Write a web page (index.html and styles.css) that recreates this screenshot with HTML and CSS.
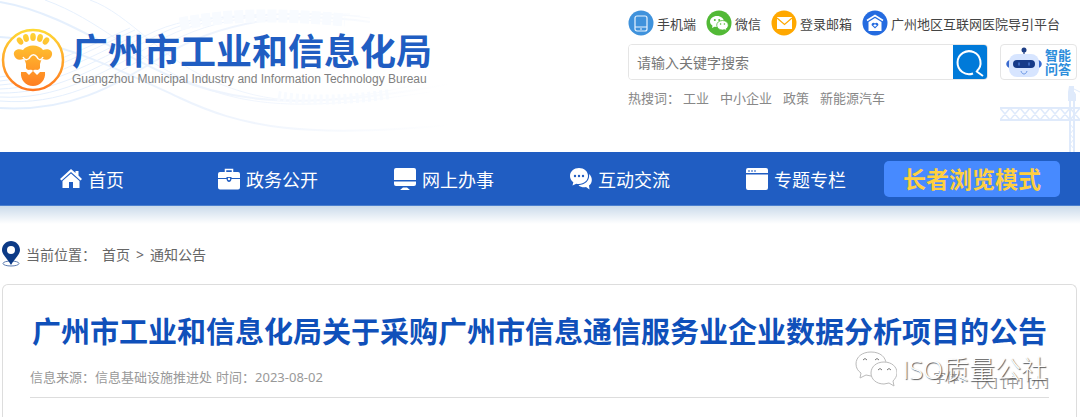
FILE: index.html
```html
<!DOCTYPE html>
<html lang="zh-CN">
<head>
  <meta charset="UTF-8">
  <title>广州市工业和信息化局</title>
  <meta name="viewport" content="width=device-width, initial-scale=1">
  <link rel="stylesheet" href="styles.css">
</head>
<body>
  <header class="site-header">
    <svg class="bg-waves" viewBox="0 0 500 152" aria-hidden="true">
      <defs>
        <linearGradient id="wave-fade" gradientUnits="userSpaceOnUse" x1="0" y1="0" x2="500" y2="0">
          <stop offset="0" stop-color="#e2eefd"/>
          <stop offset="0.5" stop-color="#f0f5fd"/>
          <stop offset="0.9" stop-color="#ffffff"/>
        </linearGradient>
      </defs>
      <g fill="none" stroke="url(#wave-fade)">
        <path d="M0 108C70 112 110 88 165 55S290 10 370 22" stroke-width="2"/>
        <path d="M0 101C60 106 105 82 160 48S290 8 370 18"/>
        <path d="M0 97C55 100 100 76 155 43S280 12 360 16"/>
        <path d="M0 93C50 94 95 70 150 39S270 16 350 14"/>
        <path d="M0 89C45 88 90 65 145 36S260 19 340 22"/>
        <path d="M0 85C45 82 85 60 140 33"/>
        <path d="M0 81C40 77 80 55 135 30"/>
        <path d="M0 77C36 72 76 52 130 28"/>
        <path d="M0 37C60 40 120 70 180 98S300 140 460 124" stroke-width="2"/>
        <path d="M0 2C60 12 110 50 170 76S300 112 450 84" stroke-width="2"/>
        <path d="M45 0C100 20 130 55 190 82S310 110 430 92"/>
        <path d="M90 0C130 14 160 60 220 84S330 104 420 84"/>
      </g>
      <path d="M180 24C230 14 280 14 345 20" fill="none" stroke="#f8fbff" stroke-width="13" stroke-dasharray="9 2"/>
      <path d="M278 96C310 102 350 100 390 94" fill="none" stroke="#f8fbff" stroke-width="10" stroke-dasharray="3 3"/>
    </svg>
    <svg class="bg-crane" viewBox="0 0 80 68" aria-hidden="true">
      <g fill="none" stroke="#dfeafb" stroke-width="2">
        <path d="M0 24H80M0 36H80"/>
        <path d="M0 24L10 36L20 24L30 36L40 24L50 36L60 24L70 36L80 24M0 36L10 24L20 36L30 24L40 36L50 24L60 36L70 24L80 36" stroke-width="1.500"/>
        <path d="M70 8V68M74 8V68"/>
        <path d="M70 40L74 45L70 50L74 55L70 60L74 65M72 4L80 8" stroke-width="1"/>
      </g>
      <path d="M69 2H74V8L76 10V17H68V8Z" fill="#dfeafb"/>
    </svg>

    <a class="brand" href="#">
      <svg class="brand-mark" viewBox="0 0 64 64" aria-hidden="true">
        <defs>
          <linearGradient id="mark-fill" gradientUnits="userSpaceOnUse" x1="0" y1="0" x2="0" y2="64">
            <stop offset="0" stop-color="#ffdc35"/>
            <stop offset="1" stop-color="#ff7420"/>
          </linearGradient>
        </defs>
        <circle cx="32" cy="32" r="30" fill="#fff" stroke="url(#mark-fill)" stroke-width="2.500"/>
        <g fill="url(#mark-fill)">
          <ellipse cx="19" cy="13" rx="2.800" ry="4" transform="rotate(-35 19 13)"/>
          <ellipse cx="25" cy="10" rx="2.800" ry="4" transform="rotate(-15 25 10)"/>
          <ellipse cx="32" cy="9" rx="2.800" ry="4"/>
          <ellipse cx="39" cy="10" rx="2.800" ry="4" transform="rotate(15 39 10)"/>
          <ellipse cx="45" cy="13" rx="2.800" ry="4" transform="rotate(35 45 13)"/>
          <path d="M22 22C26 16 38 16 42 22C48 20 52 23 51 27C50 31 46 33 42 31C40 31 40 33 39 36L39 40C37 44 34 40 32 43C30 40 27 44 25 40L25 36C24 33 24 31 22 31C18 33 14 31 13 27C12 23 16 20 22 22Z"/>
          <path d="M20 44L25 44L28 47L32 43L36 47L39 44L44 44C45 52 39 58 32 58S19 52 20 44Z"/>
        </g>
        <path d="M22 29C24 33 28 32 29 29C31 26 34 26 36 29C37 32 40 33 42 29" fill="none" stroke="#fff" stroke-width="1.500"/>
      </svg>
      <span class="brand-text">
        <span class="brand-cn">广州市工业和信息化局</span>
        <span class="brand-en">Guangzhou Municipal Industry and Information Technology Bureau</span>
      </span>
    </a>

    <div class="header-tools">
      <ul class="quick-links">
        <li><a href="#">
          <svg viewBox="0 0 26 26" aria-hidden="true">
            <circle cx="13" cy="13" r="12.500" fill="#3f92dc"/>
            <rect x="7" y="6" width="12" height="15" rx="2" fill="none" stroke="#e8f3ff" stroke-width="1.200"/>
            <path d="M7 17H19M12 19H14" stroke="#e8f3ff"/>
          </svg>手机端</a></li>
        <li><a href="#">
          <svg viewBox="0 0 26 26" aria-hidden="true">
            <circle cx="13" cy="13" r="12.500" fill="#52b936"/>
            <path d="M11 6C7 6 4 8.500 4 11.500C4 13.300 5 14.700 6.500 15.700L6 18L8.500 16.700L11 17C15 17 18 14.500 18 11.500S15 6 11 6Z" fill="#fff"/>
            <path d="M16.500 10.500C13 10.500 10.700 12.700 10.700 15.200S13 20 16.500 20L18.700 19.700L20.600 20.800L20.100 18.900C21.500 18 22.300 16.700 22.300 15.200C22.300 12.700 20 10.500 16.500 10.500Z" fill="#fff" stroke="#52b936" stroke-width=".8"/>
            <g fill="#52b936"><circle cx="8.800" cy="10" r="1"/><circle cx="13.200" cy="10" r="1"/><circle cx="14.600" cy="14" r=".8"/><circle cx="18.400" cy="14" r=".8"/></g>
          </svg>微信</a></li>
        <li><a href="#">
          <svg viewBox="0 0 26 26" aria-hidden="true">
            <circle cx="13" cy="13" r="12.500" fill="#ffa800"/>
            <rect x="6" y="7" width="15" height="12" fill="#fff"/>
            <path d="M6 8L13.500 14.500L21 8" fill="none" stroke="#ffa800" stroke-width="1.200"/>
          </svg>登录邮箱</a></li>
        <li><a href="#">
          <svg viewBox="0 0 26 26" aria-hidden="true">
            <circle cx="13" cy="13" r="12.500" fill="#246be0"/>
            <path d="M5 10.500L13 5.500L21 10.500" fill="none" stroke="#fff" stroke-width="1.600"/>
            <path d="M6.500 12L13 8L19.500 12V21H6.500Z" fill="#fff"/>
            <path d="M13 18.500L9.700 15.300C9 13 12 12 13 13.600C14 12 17 13 16.300 15.300Z" fill="#246be0"/>
            <path d="M13 14V17M11.500 15.500H14.500" stroke="#fff"/>
          </svg>广州地区互联网医院导引平台</a></li>
      </ul>

      <div class="search-row">
        <form class="search-form">
          <input type="text" aria-label="关键字搜索" placeholder="请输入关键字搜索">
          <button type="button" aria-label="搜索">
            <svg viewBox="0 0 34 36" aria-hidden="true">
              <path d="M20 28.500A11.500 11.500 0 1 1 24 26M23 26L30 31" fill="none" stroke="#fff" stroke-width="2"/>
            </svg>
          </button>
        </form>
        <a class="ask-robot" href="#">
          <svg viewBox="0 0 36 32" aria-hidden="true">
            <path d="M18 4V9" stroke="#1e3f86" stroke-width="1.200"/>
            <circle cx="18" cy="4" r="2.500" fill="#1e3f86"/>
            <path d="M4 14C-1 15 -1 21 4 22ZM32 14C37 15 37 21 32 22Z" fill="#3a6bd0"/>
            <rect x="3" y="8" width="30" height="23" rx="8" fill="#d7e5ff"/>
            <rect x="7" y="14" width="22" height="8" rx="4" fill="#163a88"/>
            <path d="M12 18H14M22 18H24" stroke="#3b66bd" stroke-width="3"/>
            <path d="M15 25C16 29 20 29 21 25" fill="none" stroke="#6f9ae6"/>
          </svg>
          <span>智能<br>问答</span>
        </a>
      </div>

      <div class="hot-words">
        <span>热搜词：</span>
        <a href="#">工业</a>
        <a href="#">中小企业</a>
        <a href="#">政策</a>
        <a href="#">新能源汽车</a>
      </div>
    </div>
  </header>

  <nav class="main-nav">
    <a href="#">
      <svg viewBox="0 0 22 22" aria-hidden="true">
        <path d="M11 1L0 11L1.500 12.500L11 4L20.500 12.500L22 11L18.500 7.500V3H15.500V5Z"/>
        <path d="M11 5.500L2.500 13V20H9V14H13V20H19.500V13Z"/>
      </svg>首页</a>
    <a href="#">
      <svg viewBox="0 0 22 22" aria-hidden="true">
        <path d="M7.500 5V1.500H14.500V5" fill="none" stroke="#fff" stroke-width="1.500"/>
        <path d="M2 4H20Q22 4 22 6V10H13.500V9H8.500V10H0V6Q0 4 2 4Z"/>
        <path d="M0 11H8.500Q9 14 11 14T13.500 11H22V19.500Q22 21.500 20 21.500H2Q0 21.500 0 19.500Z"/>
        <circle cx="11" cy="11" r="1.200"/>
      </svg>政务公开</a>
    <a href="#">
      <svg viewBox="0 0 22 22" aria-hidden="true">
        <path d="M2 0H20Q22 0 22 2V12H0V2Q0 0 2 0ZM0 13.500H22V16Q22 18 20 18H2Q0 18 0 16ZM9 19.500H13L16 22H6Z"/>
      </svg>网上办事</a>
    <a href="#">
      <svg viewBox="0 0 22 22" aria-hidden="true">
        <path d="M9 0C4 0 0 3.500 0 8C0 10.500 1.300 12.800 3.300 14.200L2.500 17.500L6.300 15.700C13 17 18 13 18 8S14 0 9 0Z"/>
        <path d="M19 6C20 12 16 16.500 8.500 17.200C10.500 19 13.500 19.600 16 19L19.500 21.500L19 17.500C22.500 15 23 9.500 19 6Z"/>
        <g fill="#205dc2"><circle cx="5" cy="8" r="1.200"/><circle cx="9" cy="8" r="1.200"/><circle cx="13" cy="8" r="1.200"/></g>
      </svg>互动交流</a>
    <a href="#">
      <svg viewBox="0 0 22 22" aria-hidden="true">
        <path d="M2 0H20Q22 0 22 2V5H0V2Q0 0 2 0ZM0 6.500H22V20Q22 22 20 22H2Q0 22 0 20Z"/>
        <path d="M2 3H4M5 3H7M8 3H10" stroke="#205dc2" stroke-width="1.200"/>
      </svg>专题专栏</a>
    <button class="elder-mode" type="button">长者浏览模式</button>
  </nav>

  <main>
    <div class="breadcrumb">
      <svg viewBox="0 0 18 26" aria-hidden="true">
        <ellipse cx="9" cy="22.500" rx="8" ry="2.500" fill="none" stroke="#5b7bb0"/>
        <path d="M9 0C4 0 0 4 0 9C0 14 6 18 9 24C12 18 18 14 18 9C18 4 14 0 9 0Z" fill="#0c3a86"/>
        <circle cx="9" cy="9" r="4" fill="#fff"/>
      </svg>
      <span>当前位置：</span>
      <a href="#">首页</a>
      <span>&gt;</span>
      <a href="#">通知公告</a>
    </div>

    <article class="article">
      <h1>广州市工业和信息化局关于采购广州市信息通信服务业企业数据分析项目的公告</h1>
      <div class="article-meta">
        <span>信息来源：信息基础设施推进处</span>
        <span>时间：2023-08-02</span>
        <div class="font-size">
          字体：
          <button type="button">[大]</button>
          <button type="button">[中]</button>
          <button type="button">[小]</button>
        </div>
        <div class="watermark">
          <svg viewBox="0 0 42 36" aria-hidden="true">
            <path d="M16 1C7 1 1 6 1 13C1 17 3 20 6 22L5 27L11 24L16 25C25 25 31 20 31 13S25 1 16 1Z"/>
            <path d="M29 11C21 11 16 16 16 22S21 33 29 33L34 32L39 35L38 30C40 28 42 25 42 22C42 16 37 11 29 11Z"/>
            <path d="M8 9Q10 6 12 9M20 9Q22 6 24 9M23 19Q25 16 27 19M32 19Q34 16 36 19" class="eyes"/>
          </svg>
          <span>ISO质量公社</span>
        </div>
      </div>
    </article>
  </main>
</body>
</html>
```
FILE: styles.css
```css
:root {
  --blue: #205dc2;
  --title-blue: #0f50ba;
  --border: #dddddd;
}

* {
  box-sizing: border-box;
}

body {
  margin: 0;
  min-height: 100vh;
  display: flex;
  flex-direction: column;
  font-family: "Noto Sans", "Noto Sans CJK SC", sans-serif;
  font-size: 13px;
  color: #444;
  background: #fff;
}

a {
  color: inherit;
  text-decoration: none;
}

button {
  font-family: inherit;
  cursor: pointer;
}

svg {
  display: block;
  flex: none;
}

/* header */
.site-header {
  position: relative;
  display: flex;
  justify-content: space-between;
  align-items: flex-start;
  padding: 10px 3px 44px 1px;
}

.bg-waves {
  position: absolute;
  left: 0;
  top: 0;
  width: 500px;
  height: 152px;
}

.bg-crane {
  position: absolute;
  right: 0;
  bottom: 0;
  width: 80px;
  height: 68px;
}

.brand {
  position: relative;
  display: flex;
  gap: 7px;
  padding-top: 18px;
}

.brand-mark {
  width: 64px;
  height: 64px;
}

.brand-text {
  padding-top: 5px;
}

.brand-cn,
.brand-en {
  display: block;
  white-space: nowrap;
}

.brand-cn {
  font-size: 36px;
  line-height: 38px;
  font-weight: 700;
  color: var(--blue);
}

.brand-en {
  font-family: "Liberation Sans", Arial, sans-serif;
  font-size: 12px;
  line-height: 16px;
  color: #808080;
}

.header-tools {
  position: relative;
  width: 449px;
}

.quick-links {
  display: flex;
  gap: 10px;
  margin: 0 0 8px;
  padding: 0;
  list-style: none;
  white-space: nowrap;
}

.quick-links a {
  display: flex;
  align-items: center;
  gap: 3px;
}

.quick-links svg {
  width: 26px;
  height: 26px;
}

.search-row {
  display: flex;
  gap: 12px;
  height: 36px;
}

.search-form {
  flex: 1;
  display: flex;
  border: 1px solid #e5e5e5;
  border-radius: 4px;
  overflow: hidden;
  background: #fff;
}

.search-form input {
  flex: 1;
  min-width: 0;
  padding: 0 8px;
  border: 0;
  outline: 0;
  font-family: inherit;
  font-size: 14px;
}

.search-form input::placeholder {
  color: #777;
  opacity: 1;
}

.search-form button {
  width: 34px;
  padding: 0;
  border: 0;
  background: #007ad9;
}

.ask-robot {
  display: flex;
  align-items: center;
  gap: 3px;
  width: 77px;
  padding-left: 5px;
  border: 1px solid #e5e5e5;
  border-radius: 4px;
  background: #fff;
  color: #2c8ddb;
  font-weight: 700;
  line-height: 14px;
}

.ask-robot svg {
  width: 36px;
  height: 32px;
}

.hot-words {
  display: flex;
  gap: 11px;
  margin-top: 8px;
  line-height: 20px;
  color: #888;
}

.hot-words span {
  margin-right: -8px;
}

/* navigation */
.main-nav {
  display: grid;
  grid-template-columns: repeat(6, 1fr);
  align-items: center;
  height: 54px;
  padding: 0 20px 0 4px;
  background: var(--blue);
  border-bottom: 1px solid #4a7fce;
  color: #fff;
  font-size: 18px;
}

.main-nav a {
  display: flex;
  align-items: center;
  justify-content: center;
  gap: 6px;
}

.main-nav svg {
  width: 22px;
  height: 22px;
  fill: #fff;
}

.elder-mode {
  height: 36px;
  padding: 0;
  border: 0;
  border-radius: 5px;
  background: #478aff;
  color: #ffcf3f;
  font-size: 23px;
  line-height: 36px;
  font-weight: 700;
}

/* content */
main {
  flex: 1;
  display: flex;
  flex-direction: column;
  padding: 34px 3px 0 2px;
  background: linear-gradient(#cbdbeb, #fff 18px);
}

.breadcrumb {
  display: flex;
  align-items: center;
  gap: 6px;
  height: 28px;
  margin-bottom: 16px;
  font-size: 14px;
  color: #666;
}

.breadcrumb svg {
  width: 18px;
  height: 26px;
}

.article {
  flex: 1;
  padding: 24px 27px 0;
  border: 1px solid var(--border);
  border-bottom: 0;
  border-radius: 6px 6px 0 0;
}

.article h1 {
  margin: 0 -10px;
  font-size: 29px;
  line-height: 46px;
  font-weight: 700;
  text-align: center;
  color: var(--title-blue);
}

.article-meta {
  position: relative;
  display: flex;
  gap: 4px;
  height: 43px;
  padding-top: 12px;
  line-height: 20px;
  color: #999;
  border-bottom: 1px solid var(--border);
}

.font-size {
  display: flex;
  gap: 4px;
  margin-left: auto;
}

.font-size button {
  padding: 0;
  border: 0;
  background: none;
  color: inherit;
  font-size: 13px;
  line-height: 20px;
}

/* account mark printed over the page */
.watermark {
  position: absolute;
  right: 2px;
  top: -4px;
  display: flex;
  gap: 5px;
  color: #fff;
  font-family: "Open Sans", "Noto Sans CJK SC", sans-serif;
  font-size: 26px;
  line-height: 36px;
  font-weight: 300;
  text-shadow: 1px 1px 1px #555;
}

.watermark svg {
  width: 42px;
  height: 36px;
  fill: #fff;
  stroke: #bbb;
  stroke-width: 1;
}

.watermark .eyes {
  fill: none;
  stroke: #777;
}
```
